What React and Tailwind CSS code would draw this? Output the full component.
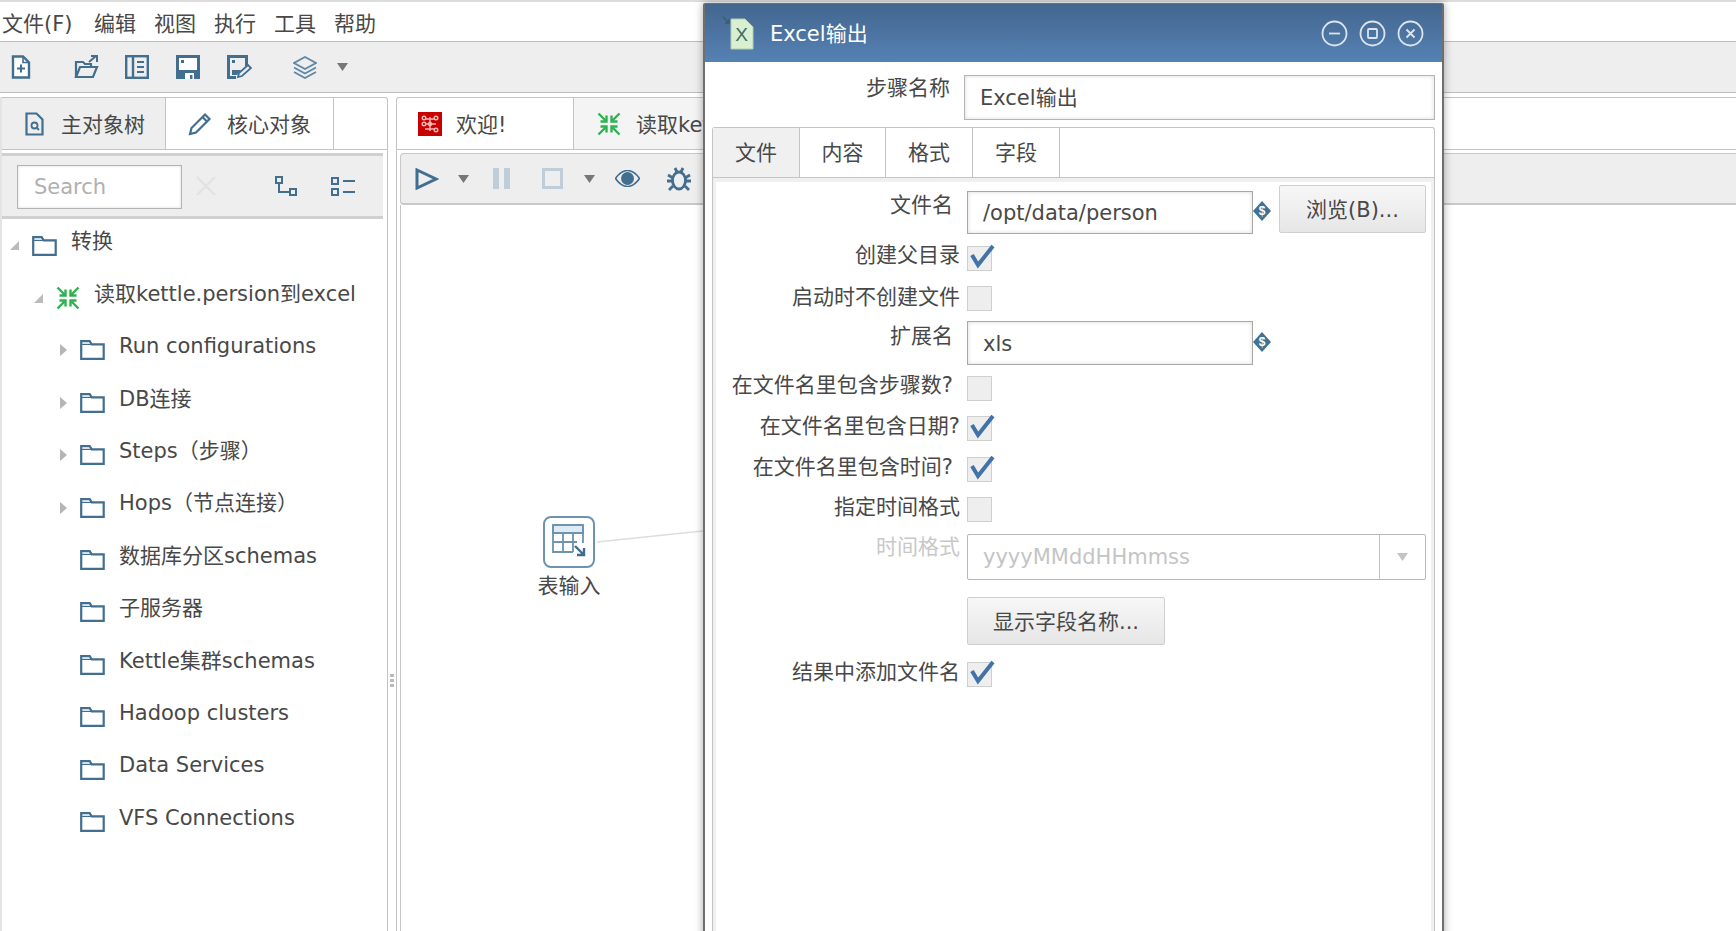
import React from "react";

const blue = "#426e90";

const DocIcon = () => (
  <svg width="20" height="24" viewBox="0 0 20 24" fill="none" stroke={blue} strokeWidth="2.4">
    <path d="M2 1.500h10l6 6v15H2z" fill="#fff" />
    <path d="M12 1.500v6h6" strokeWidth="1.600" />
    <path d="M6 13.500h8M10 9.500v8" strokeWidth="2" />
  </svg>
);

const OpenIcon = () => (
  <svg width="25" height="24" viewBox="0 0 25 24" fill="none" stroke={blue} strokeWidth="2.2">
    <path d="M2 22V7h7l2 2h6v3" />
    <path d="M2 22l4-10h17l-4 10z" />
    <path d="M15 7l7-6M17 1h6v6" strokeWidth="2" />
  </svg>
);

const ExploreIcon = () => (
  <svg width="24" height="24" viewBox="0 0 24 24" fill="none" stroke={blue} strokeWidth="2.4">
    <rect x="1.200" y="1.200" width="21.600" height="21.600" />
    <path d="M8 1v22" />
    <path d="M12 7h7M12 12h7M12 17h7" strokeWidth="2" />
  </svg>
);

const SaveIcon = () => (
  <svg width="24" height="24" viewBox="0 0 24 24">
    <path d="M0 0h24v24H0z" fill={blue} />
    <path d="M3 3h18v12H3z" fill="#fff" />
    <path d="M5 5h3v3H5z" fill={blue} />
    <path d="M9 18h9v6H9z" fill="#fff" />
    <path d="M14 20h2.500v4H14z" fill={blue} />
  </svg>
);

const SaveAsIcon = () => (
  <svg width="25" height="24" viewBox="0 0 25 24" fill="none">
    <path d="M0 0h21v11h-3V3H3v18h6v3H0z" fill={blue} />
    <path d="M5 5h3v3H5z" fill={blue} />
    <path d="M5 15h9l-4 5H5z" fill={blue} />
    <path d="M11 22l1-4 9-8 3 3-9 8z" fill="#eee" stroke={blue} strokeWidth="1.800" />
  </svg>
);

const LayersIcon = () => (
  <svg width="24" height="23" viewBox="0 0 24 23" fill="none" stroke="#5d87a5" strokeWidth="1.800">
    <path d="M12 1l11 6-11 6L1 7z" />
    <path d="M1 11.500l11 6 11-6" />
    <path d="M1 16l11 6 11-6" />
  </svg>
);

const Caret = ({ className }) => (
  <svg width="11" height="8" viewBox="0 0 11 8" className={className}>
    <path d="M0 0h11L5.500 8z" fill="#777" />
  </svg>
);

const TreeDocIcon = () => (
  <svg width="19" height="24" viewBox="0 0 19 24" fill="none" stroke={blue} strokeWidth="2.2">
    <path d="M1.500 1.500h10l6 6v15h-16z" />
    <circle cx="9.500" cy="13.500" r="3" strokeWidth="1.800" />
    <path d="M12 16l2 2" strokeWidth="1.800" />
  </svg>
);

const PencilIcon = () => (
  <svg width="24" height="24" viewBox="0 0 24 24" fill="none" stroke={blue} strokeWidth="2.2">
    <path d="M2 22l1.500-6L17 2.500l4.500 4.500L8 20.500z" />
    <path d="M14.500 5l4.500 4.500" />
  </svg>
);

const SpoonIcon = () => (
  <svg width="24" height="24" viewBox="0 0 24 24">
    <rect width="24" height="24" fill="#c80000" />
    <g stroke="#f4b8b8" strokeWidth="1.400" fill="none">
      <path d="M8 7h8M8 12h10M12 5v14M7 17h10" />
      <circle cx="6" cy="6" r="1.800" />
      <circle cx="18" cy="6" r="1.800" />
      <circle cx="6" cy="12" r="1.800" />
      <circle cx="18" cy="18" r="1.800" />
      <circle cx="12" cy="12" r="1.600" />
    </g>
  </svg>
);

const TransIcon = () => (
  <svg width="24" height="24" viewBox="0 0 24 24" fill="none" stroke="#2cb24f" strokeWidth="2.4">
    <path d="M1.500 1.500l7 7M22.500 1.500l-7 7M1.500 22.500l7-7M22.500 22.500l-7-7" />
    <path d="M9.500 3.500v6h-6M14.500 3.500v6h6M9.500 20.500v-6h-6M14.500 20.500v-6h6" />
  </svg>
);

const FolderIcon = () => (
  <svg width="25" height="20" viewBox="0 0 25 20" fill="none" stroke={blue} strokeWidth="2.2">
    <path d="M1.200 18.800V1.200h8.500l2 3.200h12v14.400z" />
    <path d="M1.200 4.400h10.500" strokeWidth="1.200" />
  </svg>
);

const TreeArrow = ({ open }) =>
  open ? (
    <svg width="9" height="9" viewBox="0 0 9 9">
      <path d="M9 0v9H0z" fill="#bbb" />
    </svg>
  ) : (
    <svg width="7" height="12" viewBox="0 0 7 12">
      <path d="M0 0l7 6-7 6z" fill="#b5b5b5" />
    </svg>
  );

const Variable = () => (
  <svg width="18" height="20" viewBox="0 0 18 20">
    <path d="M9 0l9 10-9 10-9-10z" fill="#3f7396" />
    <text x="9" y="14" textAnchor="middle" fontSize="12" fontWeight="700" fill="#fff" fontFamily="Liberation Sans, sans-serif">$</text>
  </svg>
);

const Checkbox = ({ checked }) => (
  <div className="relative w-[25px] h-[25px] bg-[#eeeeee] border border-[#cfcfcf]">
    {checked && (
      <svg width="30" height="30" viewBox="0 0 30 30" className="absolute left-0 -top-[5px]" fill="none">
        <path d="M4 13l6 10L25 4" stroke="#4273a8" strokeWidth="4" />
      </svg>
    )}
  </div>
);

const treeRows = [
  { label: "转换", left: "pl-[8px]", arrow: "open", gap: "ml-[13px]", text: "ml-[14px]" },
  { label: "读取kettle.persion到excel", left: "pl-[32px]", arrow: "open", icon: "trans", gap: "ml-[13px]", text: "ml-[14px]" },
  { label: "Run configurations", arrow: "closed" },
  { label: "DB连接", arrow: "closed" },
  { label: "Steps（步骤）", arrow: "closed" },
  { label: "Hops（节点连接）", arrow: "closed" },
  { label: "数据库分区schemas" },
  { label: "子服务器" },
  { label: "Kettle集群schemas" },
  { label: "Hadoop clusters" },
  { label: "Data Services" },
  { label: "VFS Connections" },
];

function TreeRow({ row }) {
  return (
    <div className={`flex items-center h-[52.4px] ${row.left || "pl-[57px]"}`}>
      <div className="w-[9px] flex justify-center mt-[9px]">
        {row.arrow && <TreeArrow open={row.arrow === "open"} />}
      </div>
      <div className={`${row.gap || "ml-[12px]"} mt-[9px] flex`}>
        {row.icon === "trans" ? <TransIcon /> : <FolderIcon />}
      </div>
      <span className={`${row.text || "ml-[14px]"} pt-[2px] whitespace-nowrap`}>{row.label}</span>
    </div>
  );
}

function FormRow({ label, labelClass, rowClass, pad, children }) {
  return (
    <div className={`flex items-start ${rowClass}`}>
      <div className={`w-[251px] text-right whitespace-nowrap leading-[20px] ${pad || "pr-[7px]"} ${labelClass}`}>{label}</div>
      {children}
    </div>
  );
}

function ExcelDialog() {
  return (
    <div className="absolute left-[703px] top-[3px] w-[741px] h-[940px] bg-white border-x-2 border-t border-[#6f6f6f] rounded-t-[2px] shadow-[0_0_8px_rgba(0,0,0,0.35)]">
      <div className="flex items-center h-[58px] bg-gradient-to-b from-[#43668f] to-[#5582b4] text-white">
        <svg width="34" height="34" viewBox="0 0 34 34" className="ml-[15px]">
          <path d="M3 1l6 6M9 3v4H5" stroke="#3a5a7a" strokeWidth="1.400" fill="none" />
          <path d="M11 3h14l8 8v22H11z" fill="#d8efd2" stroke="#b5cdb0" />
          <text x="21.500" y="25" textAnchor="middle" fontSize="19" fill="#3f6d63" fontFamily="Liberation Sans, sans-serif">X</text>
        </svg>
        <span className="ml-[16px] pt-[4px]">Excel输出</span>
        <div className="ml-auto mr-[18px] flex gap-[11px]">
          <svg width="27" height="27" viewBox="0 0 27 27" fill="none" stroke="#dce4ee" strokeWidth="1.800">
            <circle cx="13.500" cy="13.500" r="12" />
            <path d="M8 13.500h11" />
          </svg>
          <svg width="27" height="27" viewBox="0 0 27 27" fill="none" stroke="#dce4ee" strokeWidth="1.800">
            <circle cx="13.500" cy="13.500" r="12" />
            <rect x="9" y="9" width="9" height="9" rx="1" />
          </svg>
          <svg width="27" height="27" viewBox="0 0 27 27" fill="none" stroke="#dce4ee" strokeWidth="1.800">
            <circle cx="13.500" cy="13.500" r="12" />
            <path d="M9.500 9.500l8 8M17.500 9.500l-8 8" />
          </svg>
        </div>
      </div>

      <div className="flex items-start mt-[13px] h-[52px]">
        <div className="w-[245px] text-right leading-[28px] -mt-[1px]">步骤名称</div>
        <div className="ml-[14px] w-[471px] h-[45px] flex items-center pl-[15px] pt-[2px] border border-[#b4b4b4] shadow-[inset_0_0_4px_rgba(0,0,0,0.15)]">Excel输出</div>
      </div>

      <div className="ml-[7px] w-[723px] h-[830px] border-x border-t border-[#c4c4c4] rounded-t-[3px]">
        <div className="flex h-[50px] border-b border-[#c4c4c4]">
          <div className="w-[87px] bg-[#f0f0f0] flex items-center justify-center pt-[2px] border-r border-[#c4c4c4]">文件</div>
          <div className="w-[86px] flex items-center justify-center pt-[2px] border-r border-[#c4c4c4]">内容</div>
          <div className="w-[87px] flex items-center justify-center pt-[2px] border-r border-[#c4c4c4]">格式</div>
          <div className="w-[87px] flex items-center justify-center pt-[2px] border-r border-[#c4c4c4]">字段</div>
        </div>
        <div className="h-full border-x-[3px] border-t-[4px] border-[#f0f0f0] pt-[3px] relative">
          <FormRow label="文件名" labelClass="mt-[10px]" rowClass="h-[61px]" pad="pr-[14px]">
            <div className="mt-[6px] w-[286px] h-[43px] flex items-center pl-[15px] pt-[3px] border border-[#a8a8a8] shadow-[inset_0_0_4px_rgba(0,0,0,0.15)]">/opt/data/person</div>
            <div className="mt-[16px] flex"><Variable /></div>
            <div className="ml-[8px] w-[147px] h-[48px] flex items-center justify-center pt-[4px] rounded-[2px] border border-[#cfcfcf] bg-gradient-to-b from-[#f7f7f7] to-[#e6e6e6]">浏览(B)...</div>
          </FormRow>
          <FormRow label="创建父目录" labelClass="-mt-[1px]" rowClass="h-[40px]">
            <Checkbox checked />
          </FormRow>
          <FormRow label="启动时不创建文件" labelClass="mt-[1px]" rowClass="h-[35px]">
            <Checkbox />
          </FormRow>
          <FormRow label="扩展名" labelClass="mt-[5px]" rowClass="h-[55px]" pad="pr-[14px]">
            <div className="w-[286px] h-[44px] flex items-center pl-[15px] pt-[3px] border border-[#a8a8a8] shadow-[inset_0_0_4px_rgba(0,0,0,0.15)]">xls</div>
            <div className="mt-[11px] flex"><Variable /></div>
          </FormRow>
          <FormRow label="在文件名里包含步骤数?" labelClass="-mt-[1px]" rowClass="h-[40px]" pad="pr-[14px]">
            <Checkbox />
          </FormRow>
          <FormRow label="在文件名里包含日期?" labelClass="" rowClass="h-[41px]">
            <Checkbox checked />
          </FormRow>
          <FormRow label="在文件名里包含时间?" labelClass="" rowClass="h-[40px]" pad="pr-[14px]">
            <Checkbox checked />
          </FormRow>
          <FormRow label="指定时间格式" labelClass="" rowClass="h-[37px]">
            <Checkbox />
          </FormRow>
          <FormRow label="时间格式" labelClass="mt-[3px] text-[#c8c8c8]" rowClass="h-[63px]">
            <div className="w-[459px] h-[46px] flex items-center border border-[#b8b8b8] rounded-[2px]">
              <span className="flex-1 pl-[15px] pt-[2px] text-[#c4c4c4]">yyyyMMddHHmmss</span>
              <div className="w-[46px] h-full flex items-center justify-center border-l border-[#c4c4c4]">
                <svg width="11" height="8" viewBox="0 0 11 8">
                  <path d="M0 0h11L5.500 8z" fill="#c4c4c4" />
                </svg>
              </div>
            </div>
          </FormRow>
          <FormRow label="" labelClass="" rowClass="h-[65px]">
            <div className="w-[198px] h-[48px] flex items-center justify-center pt-[4px] rounded-[2px] border border-[#cfcfcf] bg-gradient-to-b from-[#f7f7f7] to-[#e6e6e6]">显示字段名称...</div>
          </FormRow>
          <FormRow label="结果中添加文件名" labelClass="" rowClass="h-[40px]">
            <Checkbox checked />
          </FormRow>
        </div>
      </div>
    </div>
  );
}

export default function App() {
  return (
    <div className="relative w-[1736px] h-[931px] overflow-hidden bg-white flex flex-col text-[21px] text-[#484848] font-['DejaVu_Sans','Noto_Sans_CJK_SC',sans-serif]">
      {/* menu */}
      <div className="flex items-center gap-[18px] h-[42px] pl-[2px] pt-[6px] border-t-2 border-b border-t-[#dddddd] border-b-[#bcbcbc] shrink-0">
        <span className="w-[74px] whitespace-nowrap">文件(F)</span>
        <span>编辑</span>
        <span>视图</span>
        <span>执行</span>
        <span>工具</span>
        <span>帮助</span>
      </div>

      {/* main toolbar */}
      <div className="flex items-center h-[51px] bg-[#eeeeee] border-b border-[#bcbcbc] shrink-0 pl-[11px]">
        <DocIcon />
        <div className="ml-[43px] flex"><OpenIcon /></div>
        <div className="ml-[26px] flex"><ExploreIcon /></div>
        <div className="ml-[27px] flex"><SaveIcon /></div>
        <div className="ml-[27px] flex"><SaveAsIcon /></div>
        <div className="ml-[41px] flex"><LayersIcon /></div>
        <Caret className="ml-[20px]" />
      </div>

      <div className="flex flex-1 min-h-0 pt-[4px]">
        {/* left panel */}
        <div className="w-[388px] shrink-0 flex flex-col border-t border-r border-l-2 border-t-[#c4c4c4] border-r-[#c4c4c4] border-l-[#e4e4e4] rounded-tr-[3px]">
          <div className="flex h-[52px] border-b border-[#c4c4c4] shrink-0">
            <div className="w-[164px] bg-[#eeeeee] border-r border-[#c4c4c4] flex items-center pl-[23px]">
              <TreeDocIcon />
              <span className="ml-[17px] mt-[4px]">主对象树</span>
            </div>
            <div className="w-[168px] border-r border-[#c4c4c4] flex items-center pl-[22px]">
              <PencilIcon />
              <span className="ml-[15px] mt-[4px]">核心对象</span>
            </div>
          </div>
          <div className="flex items-center h-[66px] mt-[3px] mr-[4px] bg-[#eeeeee] border-y-[3px] border-[#d0d0d0] shrink-0 pl-[15px]">
            <div className="w-[165px] h-[44px] flex items-center pl-[16px] pt-[2px] bg-white border border-[#b4b4b4] shadow-[inset_0_0_3px_rgba(0,0,0,0.15)] text-[#b0b0b0] mt-[2px]">Search</div>
            <svg width="22" height="22" viewBox="0 0 22 22" className="ml-[13px]" fill="none" stroke="#e2e2e2" strokeWidth="2.400">
              <path d="M2 2l18 18M20 2L2 20" />
            </svg>
            <svg width="22" height="20" viewBox="0 0 22 20" className="ml-[58px]" fill="none" stroke={blue} strokeWidth="2">
              <rect x="1" y="1" width="6" height="6" />
              <rect x="15" y="13" width="6" height="6" />
              <path d="M4 7v9h11" />
            </svg>
            <svg width="24" height="19" viewBox="0 0 24 19" className="ml-[34px]" fill="none" stroke={blue} strokeWidth="2">
              <rect x="1" y="1" width="6" height="6" />
              <rect x="1" y="12" width="6" height="6" />
              <path d="M12 4h12M12 15h12" />
            </svg>
          </div>
          <div className="-mt-[4px] relative">
            {treeRows.map((row) => (
              <TreeRow key={row.label} row={row} />
            ))}
          </div>
        </div>

        {/* splitter */}
        <div className="w-[8px] shrink-0 flex flex-col items-center gap-[2px] pt-[577px]">
          <div className="w-[4px] h-[3px] bg-[#bbbbbb]" />
          <div className="w-[4px] h-[3px] bg-[#bbbbbb]" />
          <div className="w-[4px] h-[3px] bg-[#bbbbbb]" />
        </div>

        {/* work area */}
        <div className="flex-1 min-w-0 flex flex-col border-t border-l border-[#c4c4c4] rounded-tl-[3px]">
          <div className="flex h-[52px] border-b border-[#c4c4c4] shrink-0">
            <div className="w-[177px] border-r border-[#c4c4c4] flex items-center pl-[21px]">
              <SpoonIcon />
              <span className="ml-[14px] mt-[4px]">欢迎!</span>
            </div>
            <div className="w-[130px] bg-[#f4f4f4] flex items-center pl-[23px]">
              <TransIcon />
              <span className="ml-[15px] mt-[4px] w-[68px] overflow-hidden whitespace-nowrap">读取kettle.persion到excel</span>
            </div>
          </div>
          <div className="flex items-center h-[52px] mt-[3px] ml-[3px] bg-[#eeeeee] border-t border-b-2 border-l border-[#c8c8c8] rounded-l-[4px] shrink-0 pl-[14px]">
            <svg width="24" height="22" viewBox="0 0 24 22" fill="none" stroke={blue} strokeWidth="3">
              <path d="M2 2l19 9-19 9z" />
            </svg>
            <Caret className="ml-[19px]" />
            <svg width="17" height="21" viewBox="0 0 17 21" className="ml-[24px]">
              <path d="M0 0h6v21H0zM11 0h6v21h-6z" fill="#bfcdd8" />
            </svg>
            <svg width="21" height="21" viewBox="0 0 21 21" className="ml-[32px]" fill="none" stroke="#bfcdd8" strokeWidth="3">
              <rect x="1.500" y="1.500" width="18" height="18" />
            </svg>
            <Caret className="ml-[21px]" />
            <svg width="25" height="17" viewBox="0 0 25 17" className="ml-[20px]">
              <path d="M0.500 8.500C5 2 9 0.500 12.500 0.500S20 2 24.500 8.500C20 15 16 16.500 12.500 16.500S5 15 0.500 8.500z" fill="none" stroke={blue} strokeWidth="1.600" />
              <circle cx="12.500" cy="8.500" r="6.500" fill={blue} />
            </svg>
            <svg width="24" height="26" viewBox="0 0 24 26" className="ml-[27px]" fill="none" stroke={blue} strokeWidth="2.800">
              <ellipse cx="12" cy="14.500" rx="6.500" ry="8.500" />
              <path d="M8 2l2 4M16 2l-2 4M1 9l5 3M23 9l-5 3M0 15h6M24 15h-6M2 24l4-4M22 24l-4-4" />
            </svg>
          </div>
          <div className="relative flex-1 ml-[3px] border-l border-[#c8c8c8]">
            <svg width="120" height="20" className="absolute left-[196px] top-[323px]">
              <path d="M0 14L115 2" stroke="#dddddd" strokeWidth="1.500" />
            </svg>
            <div className="absolute left-[132px] top-[311px] w-[72px] flex flex-col items-center">
              <div className="w-[52px] h-[52px] rounded-[8px] border-2 border-[#6d93ae] bg-white flex items-center justify-center">
                <svg width="34" height="36" viewBox="0 0 34 36" fill="none" stroke="#6d93ae" strokeWidth="1.800">
                  <path d="M1 1h30v8H1z" fill="#dcebf5" />
                  <path d="M1 1v27h20M31 1v18M1 18h24M11 9v19M21 9v19" />
                  <path d="M23 22l8 8M32 24v7h-7" stroke="#3f6d90" strokeWidth="2.400" />
                </svg>
              </div>
              <span className="mt-[5px] leading-[26px] whitespace-nowrap">表输入</span>
            </div>
          </div>
        </div>
      </div>

      <ExcelDialog />
    </div>
  );
}
